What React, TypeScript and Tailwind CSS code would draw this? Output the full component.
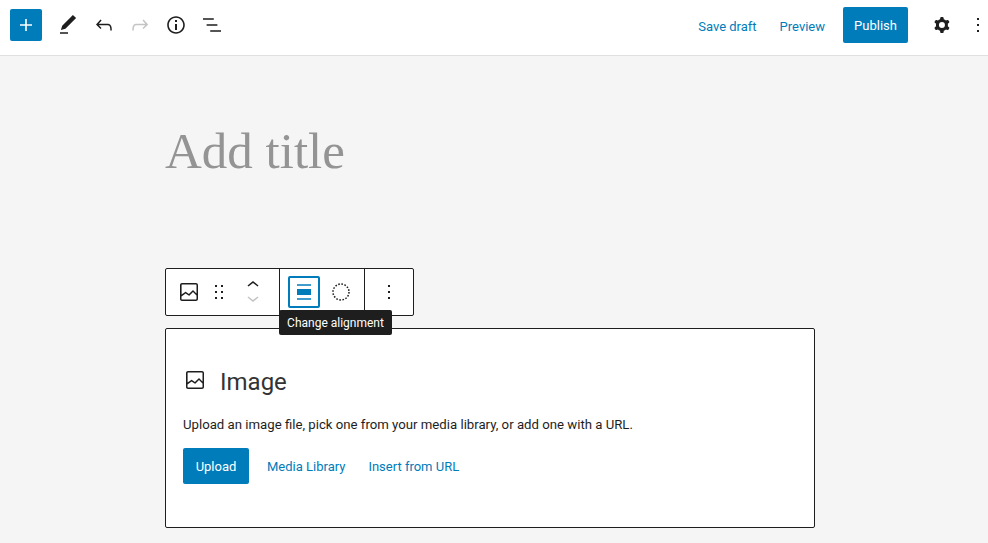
// Block editor screen with an empty image block selected.
import type { ReactNode } from 'react';

const PATHS = {
  plus: 'M18 11.2h-5.2V6h-1.6v5.2H6v1.6h5.2V18h1.6v-5.2H18z',
  edit: 'M20.1 5.1L16.9 2 6.2 12.7l-1.3 4.4 4.5-1.3L20.1 5.1zM4 20.8h8v-1.5H4v1.5z',
  undo: 'M18.3 11.7c-.6-.6-1.4-.9-2.3-.9H6.7l2.9-3.3-1.1-1-4.5 5L8.5 16l1-1-2.7-2.7H16c.5 0 .9.2 1.3.5 1 1 1 3.4 1 4.5v.3h1.5v-.2c0-1.5 0-4.3-1.5-5.7z',
  redo: 'M15.6 6.5l-1.1 1 2.9 3.3H8c-.9 0-1.7.3-2.3.9-1.4 1.5-1.4 4.2-1.4 5.6v.2h1.5v-.3c0-1.1 0-3.5 1-4.5.3-.3.7-.5 1.3-.5h9.2L14.5 15l1.1 1.1 4.6-4.6-4.6-5z',
  info: 'M12 3.2c-4.8 0-8.8 3.9-8.8 8.8 0 4.8 3.9 8.8 8.8 8.8 4.8 0 8.8-3.9 8.8-8.8 0-4.8-4-8.8-8.8-8.8zm0 16c-4 0-7.2-3.3-7.2-7.2C4.8 8 8 4.8 12 4.8s7.2 3.3 7.2 7.2c0 4-3.2 7.2-7.2 7.2zM11 17h2v-6h-2v6zm0-8h2V7h-2v2z',
  list: 'M13.8 5.2H3v1.5h10.8V5.2zm-3.6 12v1.5H21v-1.5H10.2zm7.2-6H6.6v1.5h10.8v-1.5z',
  cog: 'M10.289 4.836A1 1 0 0111.275 4h1.306a1 1 0 01.987.836l.244 1.466c.787.26 1.503.679 2.108 1.218l1.393-.522a1 1 0 011.216.437l.653 1.13a1 1 0 01-.23 1.273l-1.148.944a6.025 6.025 0 010 2.435l1.149.946a1 1 0 01.23 1.272l-.653 1.13a1 1 0 01-1.216.437l-1.394-.522c-.605.54-1.32.958-2.108 1.218l-.244 1.466a1 1 0 01-.987.836h-1.306a1 1 0 01-.986-.836l-.244-1.466a5.995 5.995 0 01-2.108-1.218l-1.394.522a1 1 0 01-1.217-.436l-.653-1.131a1 1 0 01.23-1.272l1.149-.946a6.026 6.026 0 010-2.435l-1.148-.944a1 1 0 01-.23-1.272l.653-1.131a1 1 0 011.217-.437l1.393.522a5.994 5.994 0 012.108-1.218l.244-1.466zM14.929 12a3 3 0 11-6 0 3 3 0 016 0z',
  more: 'M13 19h-2v-2h2v2zm0-6h-2v-2h2v2zm0-6h-2V5h2v2z',
  image: 'M19 3H5c-1.1 0-2 .9-2 2v14c0 1.1.9 2 2 2h14c1.1 0 2-.9 2-2V5c0-1.1-.9-2-2-2zM5 4.5h14c.3 0 .5.2.5.5v8.4l-3-2.9c-.3-.3-.8-.3-1 0L11.9 14 9 12c-.3-.2-.6-.2-.8 0l-3.6 2.6V5c-.1-.3.1-.5.4-.5zm14 15H5c-.3 0-.5-.2-.5-.5v-2.4l4.1-3 3 1.9c.3.2.7.2.9-.1L16 12l3.5 3.4V19c0 .3-.2.5-.5.5z',
  drag: 'M8 7h2V5H8v2zm0 6h2v-2H8v2zm0 6h2v-2H8v2zm6-14v2h2V5h-2zm0 8h2v-2h-2v2zm0 6h2v-2h-2v2z',
  alignNone: 'M5 15h14V9H5v6zm0 4.8h14v-1.5H5v1.5zM5 4.2v1.5h14V4.2H5z',
};

function Icon({ d, className = 'h-6 w-6 text-[#1e1e1e]' }: { d: string; className?: string }) {
  return (
    <svg viewBox="0 0 24 24" fill="currentColor" fillRule="evenodd" className={className}>
      <path d={d} />
    </svg>
  );
}

function ToolSlot({ children, className = 'w-9' }: { children: ReactNode; className?: string }) {
  return <div className={`flex h-9 items-center justify-center ${className}`}>{children}</div>;
}

function TopBar() {
  return (
    <header className="flex h-[56px] items-center border-b border-[#e0e0e0] bg-white">
      <div className="ml-[10px] mt-[-6px] flex h-8 w-8 items-center justify-center rounded-[2px] bg-[#007cba]">
        <Icon d={PATHS.plus} className="h-6 w-6 text-white" />
      </div>
      <div className="ml-2 mt-[-6px] flex items-center">
        <ToolSlot><Icon d={PATHS.edit} /></ToolSlot>
        <ToolSlot><Icon d={PATHS.undo} /></ToolSlot>
        <ToolSlot><Icon d={PATHS.redo} className="h-6 w-6 text-[#c4c4c4]" /></ToolSlot>
        <ToolSlot><Icon d={PATHS.info} /></ToolSlot>
        <ToolSlot><Icon d={PATHS.list} /></ToolSlot>
      </div>
      <div className="ml-auto mt-[-5px] flex items-center text-[13px] text-[#007cba]">
        <span className="pt-[3px]">Save draft</span>
        <span className="ml-[23px] pt-[3px]">Preview</span>
        <div className="ml-[18px] flex h-9 w-[65px] items-center justify-center rounded-[2px] bg-[#007cba] pt-[2px] text-white">
          Publish
        </div>
        <div className="ml-[22px] flex w-6 justify-center"><Icon d={PATHS.cog} /></div>
        <div className="ml-3 mr-[-2px] flex w-6 justify-center"><Icon d={PATHS.more} /></div>
      </div>
    </header>
  );
}

function BlockToolbar() {
  return (
    <div className="relative flex h-12 w-[249px] rounded-[2px] border border-[#1e1e1e] bg-white">
      <div className="flex w-[114px] items-center border-r border-[#1e1e1e] pl-[11px]">
        <Icon d={PATHS.image} />
        <Icon d={PATHS.drag} className="ml-[6px] h-6 w-6 text-[#1e1e1e]" />
        <div className="ml-[14px] flex flex-col gap-[6px]">
          <svg viewBox="4 6 16 10" fill="currentColor" className="h-[10px] w-4 text-[#1e1e1e]">
            <path d="M6.5 12.4L12 8l5.5 4.4-.9 1.2L12 10l-4.5 3.6-1-1.2z" />
          </svg>
          <svg viewBox="4 9 16 10" fill="currentColor" className="h-[10px] w-4 text-[#c4c4c4]">
            <path d="M17.5 11.6L12 16l-5.5-4.4.9-1.2L12 14l4.5-3.6 1 1.2z" />
          </svg>
        </div>
      </div>
      <div className="flex w-[85px] items-center border-r border-[#1e1e1e] pl-2">
        <div className="flex h-8 w-8 items-center justify-center rounded-[2px] border-2 border-[#007cba]">
          <Icon d={PATHS.alignNone} className="h-6 w-6 shrink-0 text-[#007cba]" />
        </div>
        <svg viewBox="0 0 24 24" className="ml-[9px] h-6 w-6 text-[#1e1e1e]" fill="none" stroke="currentColor">
          <circle cx="12" cy="12" r="8" strokeWidth="1.5" strokeDasharray="1.6 1.55" />
        </svg>
      </div>
      <div className="flex flex-1 items-center justify-center">
        <Icon d={PATHS.more} />
      </div>
      <div className="absolute left-[113px] top-[41px] z-10 flex h-[25px] w-[113px] items-center justify-center rounded-[2px] bg-[#1e1e1e] text-[12px] text-white">
        Change alignment
      </div>
    </div>
  );
}

function ImagePlaceholder() {
  return (
    <section className="mt-3 h-[200px] w-[650px] rounded-[2px] border border-[#1e1e1e] bg-white pl-[17px] pt-[33px] text-[#1e1e1e]">
      <div className="flex h-[36px] items-center">
        <Icon d={PATHS.image} />
        <span className="ml-[13px] pt-1 text-[24px] text-[#333]">Image</span>
      </div>
      <p className="mt-[17px] text-[13.2px] leading-[20px]">
        Upload an image file, pick one from your media library, or add one with a URL.
      </p>
      <div className="mt-[13px] flex items-center text-[13px] text-[#007cba]">
        <div className="flex h-9 w-[66px] items-center justify-center rounded-[2px] bg-[#007cba] pt-[2px] text-white">
          Upload
        </div>
        <span className="ml-[18px] pt-[2px]">Media Library</span>
        <span className="ml-[23px] pt-[2px]">Insert from URL</span>
      </div>
    </section>
  );
}

export default function App() {
  return (
    <div className="h-[543px] overflow-hidden bg-[#f5f5f5] font-['Roboto',sans-serif]">
      <TopBar />
      <main className="ml-[165px]">
        <h1 className="pt-[62px] font-['Liberation_Serif',serif] text-[51px] leading-[66px] font-normal text-[#949494]">
          Add title
        </h1>
        <div className="mt-[84px]">
          <BlockToolbar />
          <ImagePlaceholder />
        </div>
      </main>
    </div>
  );
}
